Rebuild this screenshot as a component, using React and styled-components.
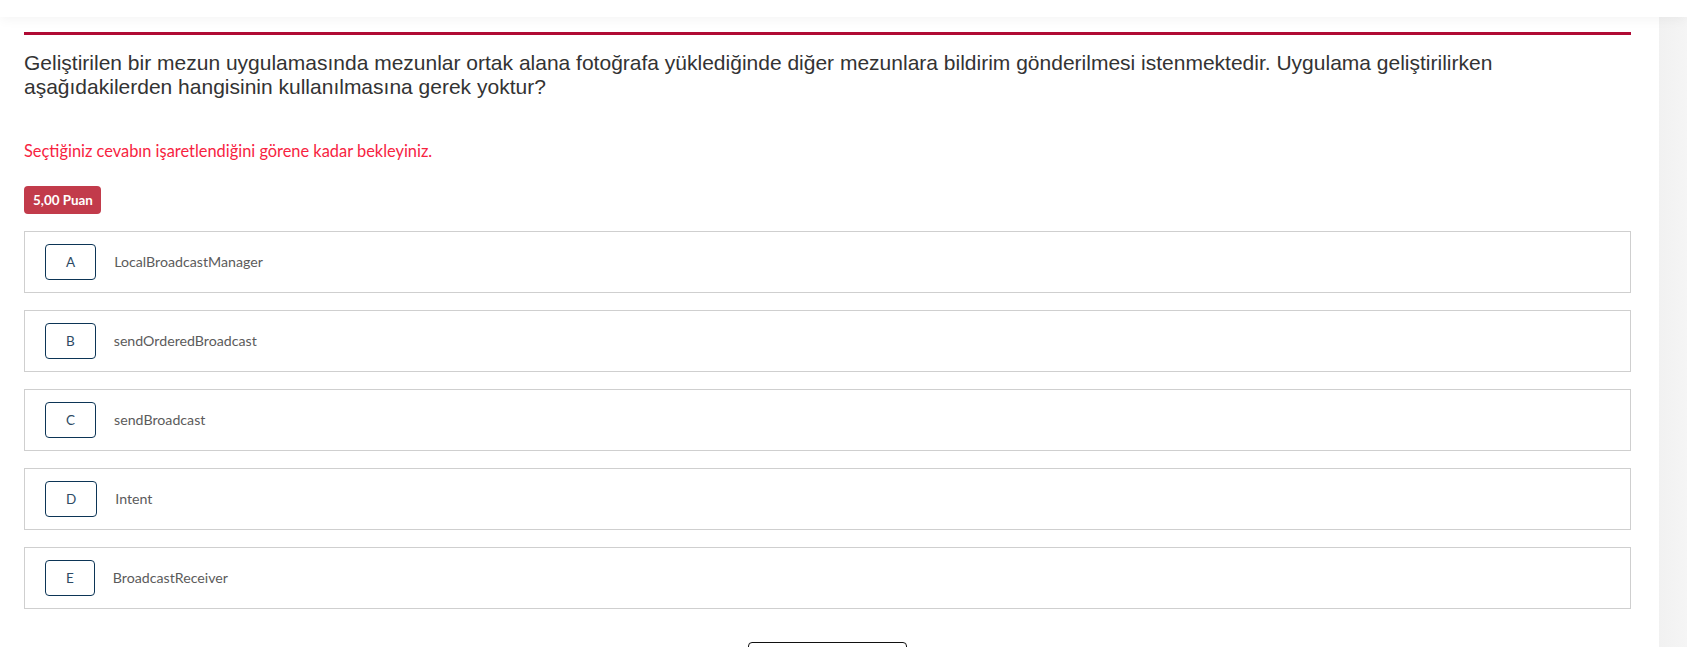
import React from "react";
import styled, { createGlobalStyle } from "styled-components";

const Global = createGlobalStyle`
  html, body { margin: 0; padding: 0; background: #fff; overflow: hidden; }
  body { font-family: Lato, "Noto Sans", sans-serif; }
  * { box-sizing: border-box; }
`;

const Page = styled.div`
  height: 647px;
  display: flex;
  flex-direction: column;
  overflow: hidden;
`;

const TopBar = styled.header`
  height: 17px;
  flex: none;
  background: #fff;
  position: relative;
  z-index: 2;
  box-shadow: 0 3px 12px rgba(0, 0, 0, 0.045);
`;

const Body = styled.div`
  flex: 1;
  display: flex;
  min-height: 0;
`;

const Main = styled.main`
  flex: 1;
  padding: 15px 28px 0 24px;
  overflow: hidden;
`;

const SideStrip = styled.aside`
  width: 28px;
  flex: none;
  background: linear-gradient(90deg, #f1f1f1, #f5f5f5);
`;

const Rule = styled.div`
  height: 3px;
  background: #b00a34;
`;

const Question = styled.p`
  margin: 16px 0 0;
  max-width: 1540px;
  font-family: "Liberation Sans", Arial, sans-serif;
  font-size: 21px;
  line-height: 24px;
  color: #333;
`;

const Warning = styled.p`
  margin: 42px 0 0;
  font-size: 16.4px;
  line-height: 20px;
  color: #f7233f;
`;

const Badge = styled.div`
  display: flex;
  align-items: center;
  width: fit-content;
  height: 28px;
  margin-top: 25px;
  padding: 0 8px 0 9px;
  border-radius: 4px;
  background: #c23b4b;
  color: #fff;
  font-weight: 700;
  font-size: 13.4px;
`;

const Options = styled.div`
  margin-top: 17px;
  display: flex;
  flex-direction: column;
  gap: 17px;
`;

const Option = styled.div`
  height: 62px;
  border: 1px solid #cfcfcf;
  display: flex;
  align-items: center;
  padding-left: 20px;
  gap: 18px;
  background: #fff;
`;

const Letter = styled.span`
  height: 36px;
  min-width: 49px;
  padding: 0 20px 1px;
  border: 1px solid #0c3556;
  border-radius: 4px;
  display: inline-flex;
  align-items: center;
  justify-content: center;
  font-size: 13.5px;
  color: #2d4a64;
`;

const OptionText = styled.span`
  font-size: 14.2px;
  color: #5b5b5b;
  padding-bottom: 2px;
`;

const Footer = styled.div`
  display: flex;
  justify-content: center;
  margin-top: 33px;
`;

const NextButton = styled.button`
  width: 159px;
  height: 40px;
  background: #fff;
  border: 1px solid #111;
  border-radius: 4px;
`;

const options = [
  ["A", "LocalBroadcastManager"],
  ["B", "sendOrderedBroadcast"],
  ["C", "sendBroadcast"],
  ["D", "Intent"],
  ["E", "BroadcastReceiver"],
];

export default function App() {
  return (
    <>
      <Global />
      <Page>
        <TopBar />
        <Body>
          <Main>
            <Rule />
            <Question>
              Geliştirilen bir mezun uygulamasında mezunlar ortak alana fotoğrafa yüklediğinde diğer mezunlara bildirim gönderilmesi istenmektedir. Uygulama geliştirilirken aşağıdakilerden hangisinin kullanılmasına gerek yoktur?
            </Question>
            <Warning>Seçtiğiniz cevabın işaretlendiğini görene kadar bekleyiniz.</Warning>
            <Badge>5,00 Puan</Badge>
            <Options>
              {options.map(([l, t]) => (
                <Option key={l}>
                  <Letter>{l}</Letter>
                  <OptionText>{t}</OptionText>
                </Option>
              ))}
            </Options>
            <Footer>
              <NextButton />
            </Footer>
          </Main>
          <SideStrip />
        </Body>
      </Page>
    </>
  );
}
